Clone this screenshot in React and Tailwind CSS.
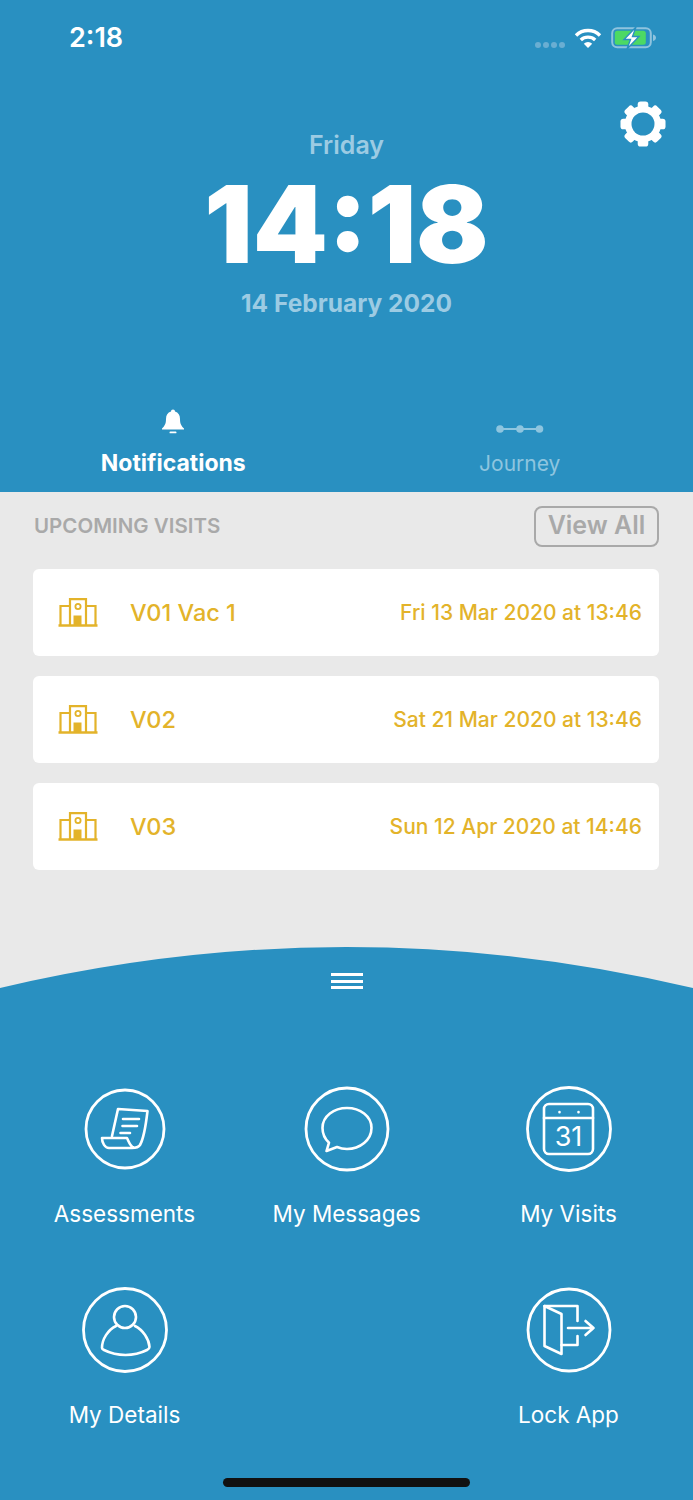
import React from 'react';

const visits = [
    { name: 'V01 Vac 1', date: 'Fri 13 Mar 2020 at 13:46' },
    { name: 'V02', date: 'Sat 21 Mar 2020 at 13:46' },
    { name: 'V03', date: 'Sun 12 Apr 2020 at 14:46' },
];

function Gear() {
    return (
        <svg width="46" height="46" viewBox="0 0 48 48" className="absolute right-[27px] top-[101px]" fill="white">
            {[0, 45, 90, 135].map((a) => (
                <rect key={a} x="18.5" y="0.5" width="11" height="47" rx="3" transform={`rotate(${a} 24 24)`} />
            ))}
            <circle cx="24" cy="24" r="19" />
            <circle cx="24" cy="24" r="12" fill="#2990c1" />
        </svg>
    );
}

function Wifi() {
    return (
        <svg width="28" height="22" viewBox="0 0 28 22" fill="none" stroke="white" strokeWidth="3.4">
            <path d="M2 8.5 A17 17 0 0 1 26 8.5" />
            <path d="M6.8 13 A10.5 10.5 0 0 1 21.2 13" />
            <path d="M14 21 L9.8 16.8 A6 6 0 0 1 18.2 16.8 Z" fill="white" stroke="none" />
        </svg>
    );
}

function Battery() {
    return (
        <svg width="46" height="22" viewBox="0 0 46 22" fill="none">
            <rect x="1.2" y="1.2" width="38.6" height="19" rx="5" stroke="#8fc3de" strokeWidth="2" />
            <rect x="3.8" y="3.8" width="31" height="14" rx="2.5" fill="#4cd964" />
            <path d="M42 7.5 C44 8 45 9.2 45 10.8 C45 12.4 44 13.6 42 14 Z" fill="#8fc3de" />
            <path d="M25 0 L13 12.5 H19.5 L16 22 L28 9.5 H21.5 Z" fill="white" stroke="#2990c1" strokeWidth="1.4" />
        </svg>
    );
}

function Bell() {
    return (
        <svg width="24" height="26" viewBox="0 0 24 26" fill="white">
            <path d="M12 0.5 C13.2 0.5 14 1.3 14 2.6 C17.4 3.5 19 6.4 19 10 C19 14.5 20 16.5 23 19.5 V20.5 H1 V19.5 C4 16.5 5 14.5 5 10 C5 6.4 6.6 3.5 10 2.6 C10 1.3 10.8 0.5 12 0.5 Z" />
            <rect x="8.5" y="22.5" width="7" height="1.8" rx="0.9" />
        </svg>
    );
}

function JourneyIcon() {
    return (
        <svg width="48" height="10" viewBox="0 0 48 10" fill="#8ec5df">
            <rect x="4" y="4" width="40" height="2" />
            <circle cx="4" cy="5" r="3.8" />
            <circle cx="24" cy="5" r="3.8" />
            <circle cx="43.5" cy="5" r="3.8" />
        </svg>
    );
}

function Building() {
    return (
        <svg width="40" height="30" viewBox="0 0 40 30" fill="none" stroke="#e3b32a" strokeWidth="2.2" className="shrink-0">
            <path d="M0.5 27.5 H39.5" strokeWidth="2.4" />
            <path d="M2.5 27 V8 H12 M37.5 27 V8 H28" />
            <path d="M12 27 V1.2 H28 V27" />
            <circle cx="20" cy="8.5" r="2.6" strokeWidth="1.8" />
            <rect x="15.5" y="17.5" width="8" height="10" fill="#e3b32a" stroke="none" />
        </svg>
    );
}

function Ring({ r, children }) {
    return (
        <svg width="90" height="90" viewBox="0 0 90 90" fill="none" stroke="white" strokeWidth="2.6" strokeLinecap="round" strokeLinejoin="round" className="shrink-0">
            <circle cx="45" cy="45" r={r} strokeWidth="2.8" />
            {children}
        </svg>
    );
}

const tiles = [
    {
        label: 'Assessments',
        icon: (
            <Ring r={39}>
                <path d="M32 52 L38 25 L67.5 27 C66 40 64 54 60 61 C58 64 55 64 52 64 H29 C25 64 22 59 22 54 H47 C49 58 50 62 54 64" />
                <path d="M43 35 H59 M42.5 42 H57 M40.5 49 H50" />
            </Ring>
        ),
    },
    {
        label: 'My Messages',
        icon: (
            <Ring r={41}>
                <path d="M45 24 C32 24 20.5 32 20.5 44 C20.5 50 23 55 27 58.7 L24.5 67 L35 63 C38 64.3 41.5 65 45 65 C58 65 69.5 56 69.5 44 C69.5 32 58 24 45 24 Z" />
            </Ring>
        ),
    },
    {
        label: 'My Visits',
        icon: (
            <Ring r={41.5}>
                <rect x="20" y="20" width="49" height="50" rx="5" />
                <path d="M20 34 H69" />
                <path d="M35.5 28 V28.2 M54.5 28 V28.2" />
                <text x="44.5" y="62" textAnchor="middle" fill="white" stroke="none" fontSize="27" fontFamily="Inter, sans-serif">31</text>
            </Ring>
        ),
    },
    {
        label: 'My Details',
        icon: (
            <Ring r={41.5}>
                <circle cx="45" cy="32" r="11" />
                <path d="M36 41 C28 45 22 54 22 63 C22 64 23 64.5 24 65 C30 68 38 70 45.5 70 C53 70 61 68 67 65 C69 64 69.5 63 69.5 62 C69 54 63 45 55 41" />
            </Ring>
        ),
    },
    null,
    {
        label: 'Lock App',
        icon: (
            <Ring r={41}>
                <path d="M20.5 21 H53.5 V36 M53.5 51 V60 H37.5" />
                <path d="M20.5 21 L37.5 29 V69 L20.5 61 Z" />
                <path d="M44 43 H69.5 M61.5 36 L69.5 43 L61.5 50" />
            </Ring>
        ),
    },
];

export default function App() {
    return (
        <div className="w-[693px] h-[1500px] overflow-hidden bg-[#e9e9e9] font-['Inter',sans-serif]">
            {/* Header */}
            <div className="relative h-[492px] bg-[#2990c1] flex flex-col">
                <div className="h-[76px] pl-[69px] pr-[36px] flex items-center justify-between">
                    <span className="text-[27px] font-semibold text-white">2:18</span>
                    <div className="flex items-center gap-[9px] -mt-[1px]">
                        <div className="flex gap-[2px] mt-[15px]">
                            {[0, 1, 2, 3].map((i) => (
                                <span key={i} className="w-[6px] h-[6px] rounded-full bg-[#6aaed2]" />
                            ))}
                        </div>
                        <Wifi />
                        <Battery />
                    </div>
                </div>
                <Gear />

                <div className="flex flex-col items-center">
                    <p className="mt-[53px] text-[25px] leading-[32px] font-semibold text-[#9ccbe3]">Friday</p>
                    <p className="text-[107px] leading-[126px] font-black text-white">14:18</p>
                    <p className="text-[24.5px] leading-[32px] font-bold text-[#9ccbe3]">14 February 2020</p>
                </div>

                <div className="mt-auto grid grid-cols-2 h-[85px]">
                    <div className="flex flex-col items-center">
                        <div className="h-[30px] flex items-center"><Bell /></div>
                        <span className="mt-[12px] text-[23px] leading-[28px] font-bold text-white">Notifications</span>
                    </div>
                    <div className="flex flex-col items-center">
                        <div className="h-[30px] mt-[7px] flex items-center"><JourneyIcon /></div>
                        <span className="mt-[6px] text-[21px] leading-[28px] text-[#8ec5df]">Journey</span>
                    </div>
                </div>
            </div>

            {/* Upcoming visits */}
            <div className="h-[455px] pl-[33px] pr-[34px]">
                <div className="h-[77px] flex items-center justify-between pl-[1px] pb-[9px]">
                    <span className="mt-[1px] text-[20.5px] font-semibold text-[#a9a9a9]">UPCOMING VISITS</span>
                    <span className="w-[125px] h-[41px] flex items-center justify-center rounded-[8px] border-2 border-[#a9a9a9] text-[25px] font-semibold text-[#a9a9a9]">View All</span>
                </div>
                <div className="flex flex-col gap-[20px]">
                    {visits.map((v) => (
                        <div key={v.name} className="h-[87px] rounded-[6px] bg-white flex items-center pl-[25px] pr-[17px]">
                            <Building />
                            <span className="ml-[32px] text-[23.5px] font-medium text-[#e3b32a]">{v.name}</span>
                            <span className="ml-auto text-[21px] font-medium text-[#e3b32a]">{v.date}</span>
                        </div>
                    ))}
                </div>
            </div>

            {/* Menu */}
            <div className="relative">
                <svg width="693" height="42" viewBox="0 0 693 42" className="block">
                    <path d="M0 41 Q346.5 -41 693 41 V42 H0 Z" fill="#2990c1" />
                </svg>
                <div className="absolute left-[331px] top-[26px] w-[32px] flex flex-col gap-[3.5px]">
                    <span className="h-[3px] bg-white" />
                    <span className="h-[3px] bg-white" />
                    <span className="h-[3px] bg-white" />
                </div>
                <div className="h-[511px] bg-[#2990c1] px-[13.5px] pt-[95px] flex flex-col">
                    <div className="grid grid-cols-3 gap-y-[56px]">
                        {tiles.map((t, i) => (
                            <div key={i} className="h-[145px] flex flex-col items-center">
                                {t && (
                                    <>
                                        {t.icon}
                                        <span className="mt-[25px] text-[22.5px] leading-[30px] text-white">{t.label}</span>
                                    </>
                                )}
                            </div>
                        ))}
                    </div>
                    <div className="mt-auto mb-[13px] mx-auto w-[247px] h-[9px] rounded-full bg-[#111]" />
                </div>
            </div>
        </div>
    );
}
